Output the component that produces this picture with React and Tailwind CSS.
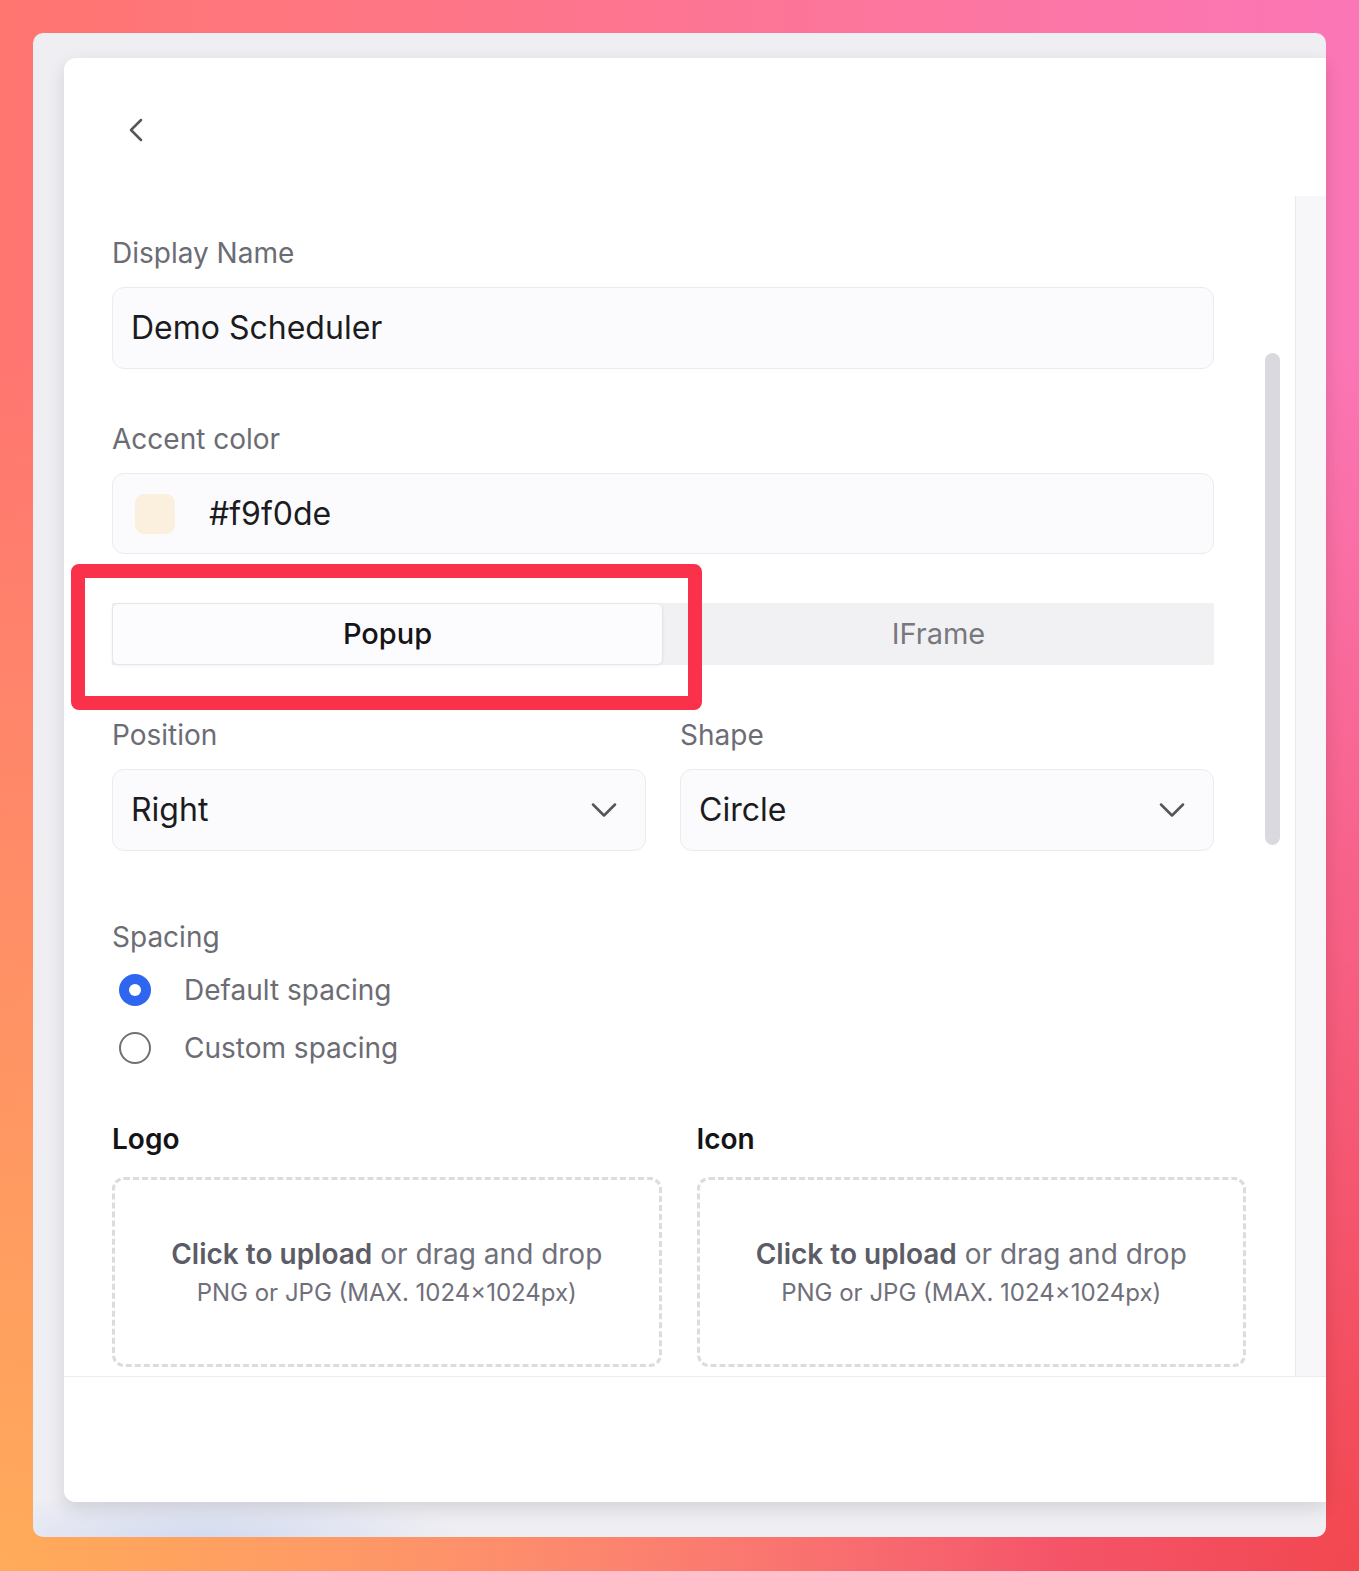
import React from 'react';
import { ChevronDown, ChevronLeft } from 'lucide-react';

const FONT = "font-['Inter','Noto_Sans',sans-serif]";

function Label({ children, className = '' }) {
  return <div className={`h-9 text-[28px] leading-9 text-[#6c6c74] ${className}`}>{children}</div>;
}

function SelectBox({ value }) {
  return (
    <div className="flex h-[82px] items-center justify-between rounded-[12px] border border-[#ebebef] bg-[#fbfbfd] pl-[18px] pr-[19px]">
      <span className="text-[32px] text-[#1c1c1f]">{value}</span>
      <ChevronDown size={44} strokeWidth={1.4} className="text-[#55555c]" />
    </div>
  );
}

function Radio({ checked, label }) {
  return (
    <div className="flex h-10 items-center pl-[7px]">
      {checked ? (
        <span className="flex h-8 w-8 items-center justify-center rounded-full bg-[#2f66ef]">
          <span className="h-3 w-3 rounded-full bg-white" />
        </span>
      ) : (
        <span className="h-8 w-8 rounded-full border-2 border-[#707078]" />
      )}
      <span className="ml-[33px] text-[28px] text-[#6c6c74]">{label}</span>
    </div>
  );
}

function Upload() {
  return (
    <div className="flex h-[190px] flex-col items-center justify-center rounded-[12px] border-[3px] border-dashed border-[#dcdce0]">
      <div className="text-[28px] leading-9 text-[#70707a]">
        <span className="font-semibold text-[#5c5c66]">Click to upload</span> or drag and drop
      </div>
      <div className="mt-[5px] text-[24px] leading-8 text-[#70707a]">PNG or JPG (MAX. 1024×1024px)</div>
    </div>
  );
}

export default function App() {
  return (
    <div className={`${FONT} min-h-[1571px] w-[1359px] p-[33px] bg-[radial-gradient(ellipse_at_bottom_left,#ffab5a_0%,transparent_55%),radial-gradient(ellipse_at_bottom_right,#f2474f_0%,transparent_55%),linear-gradient(90deg,#ff7570,#fb76b6)]`}>
      <div className="rounded-[10px] bg-[#efeef3] bg-[radial-gradient(ellipse_260px_50px_at_170px_100%,#d3dbf0,transparent)] pb-[35px] pl-[31px] pt-[25px]">
        <div className="flex flex-col overflow-hidden rounded-l-[12px] bg-white shadow-[0_6px_18px_rgba(0,0,0,0.12)]">
          {/* header */}
          <div className="h-[138px] pl-[57px] pt-[61px]">
            <ChevronLeft size={40} strokeWidth={1.5} className="-ml-[5px] -mt-[9px] text-[#55555c]" />
          </div>

          {/* body */}
          <div className="flex h-[1180px] overflow-hidden">
            <div className="w-[1182px] shrink-0 pl-12 pt-[39px]">
              <div className="w-[1102px]">
                <Label>Display Name</Label>
                <div className="mt-4 flex h-[82px] items-center rounded-[12px] border border-[#ebebef] bg-[#fbfbfd] pl-[18px] text-[32px] text-[#1c1c1f]">
                  Demo Scheduler
                </div>

                <Label className="mt-[52px]">Accent color</Label>
                <div className="mt-4 flex h-[81px] items-center rounded-[12px] border border-[#ebebef] bg-[#fbfbfd] pl-[22px]">
                  <span className="h-10 w-10 rounded-[9px] bg-[#fbefdd]" />
                  <span className="ml-[34px] text-[32px] text-[#1c1c1f]">#f9f0de</span>
                </div>

                <div className="relative mt-[49px]">
                  <div className="grid h-[62px] grid-cols-2 bg-[#f1f1f4]">
                    <div className="flex items-center justify-center rounded-[6px] border border-[#e6e6ea] bg-[#fcfcfe] text-[29px] font-medium text-[#151518] shadow-[0_1px_3px_rgba(0,0,0,0.06)]">
                      Popup
                    </div>
                    <div className="flex items-center justify-center text-[29px] text-[#78787f]">IFrame</div>
                  </div>
                  <div className="absolute -left-[41px] -top-[39px] h-[146px] w-[631px] rounded-[8px] border-[14px] border-[#f9314a]" />
                </div>

                <div className="mt-[52px] grid grid-cols-2 gap-x-[34px]">
                  <Label>Position</Label>
                  <Label>Shape</Label>
                  <div className="mt-4"><SelectBox value="Right" /></div>
                  <div className="mt-4"><SelectBox value="Circle" /></div>
                </div>

                <Label className="mt-[68px]">Spacing</Label>
                <div className="mt-[15px]"><Radio checked label="Default spacing" /></div>
                <div className="mt-[18px]"><Radio label="Custom spacing" /></div>
              </div>

              <div className="mt-[53px] grid w-[1134px] grid-cols-2 gap-x-[35px]">
                <div className="h-9 text-[28px] font-semibold leading-9 text-[#141417]">Logo</div>
                <div className="h-9 text-[28px] font-semibold leading-9 text-[#141417]">Icon</div>
                <div className="mt-5"><Upload /></div>
                <div className="mt-5"><Upload /></div>
              </div>
            </div>

            {/* scrollbar */}
            <div className="ml-[19px] pt-[157px]">
              <div className="h-[492px] w-[15px] rounded-full bg-[#d9d9df]" />
            </div>
            <div className="flex-1" />
            <div className="w-[31px] shrink-0 border-l border-[#e9e9ee] bg-[#f7f7fa]" />
          </div>

          {/* footer */}
          <div className="h-[126px] border-t border-[#ececf0] bg-white" />
        </div>
      </div>
    </div>
  );
}
